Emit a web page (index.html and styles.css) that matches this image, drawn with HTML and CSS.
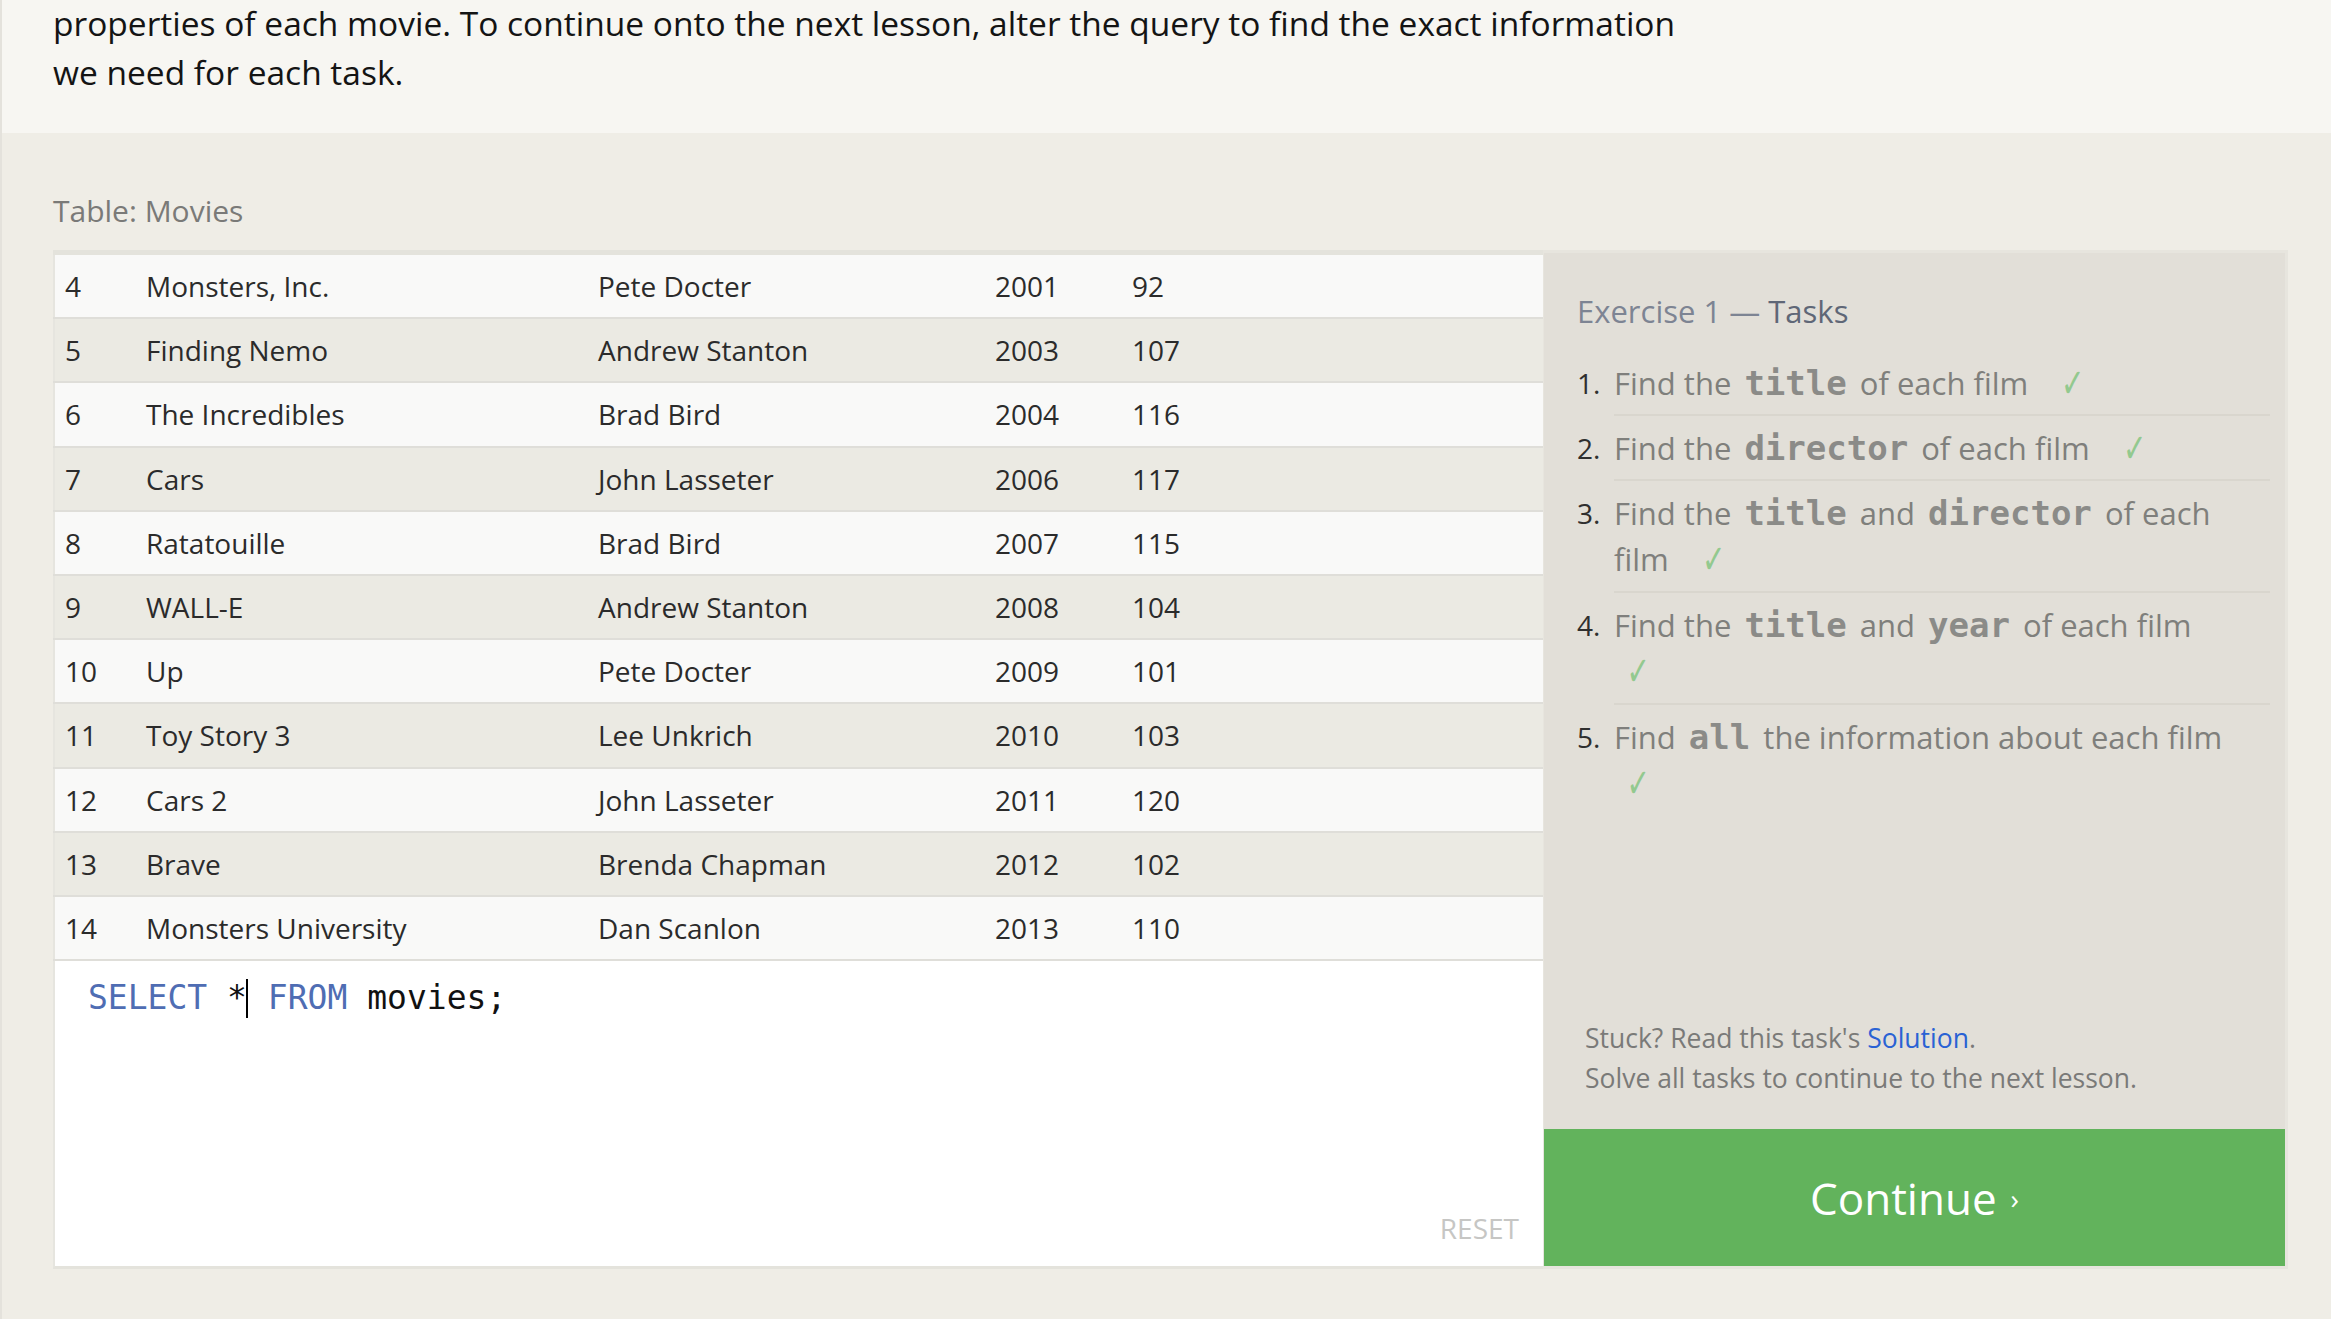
FILE: index.html
```html
<!DOCTYPE html>
<html lang="en">
<head>
<meta charset="utf-8">
<title>SQL Lesson 1: SELECT queries</title>
<link rel="stylesheet" href="styles.css">
</head>
<body>
<div class="page">
  <section class="intro">
    <p>properties of each movie. To continue onto the next lesson, alter the query to find the exact information<br>we need for each task.</p>
  </section>
  <section class="exercise">
    <div class="table-label">Table: Movies</div>
    <div class="workspace">
      <div class="left">
        <table class="movies">
          <colgroup>
            <col class="c-id"><col class="c-title"><col class="c-dir"><col class="c-year"><col>
          </colgroup>
          <tbody>
            <tr><td>4</td><td>Monsters, Inc.</td><td>Pete Docter</td><td>2001</td><td>92</td></tr>
            <tr><td>5</td><td>Finding Nemo</td><td>Andrew Stanton</td><td>2003</td><td>107</td></tr>
            <tr><td>6</td><td>The Incredibles</td><td>Brad Bird</td><td>2004</td><td>116</td></tr>
            <tr><td>7</td><td>Cars</td><td>John Lasseter</td><td>2006</td><td>117</td></tr>
            <tr><td>8</td><td>Ratatouille</td><td>Brad Bird</td><td>2007</td><td>115</td></tr>
            <tr><td>9</td><td>WALL-E</td><td>Andrew Stanton</td><td>2008</td><td>104</td></tr>
            <tr><td>10</td><td>Up</td><td>Pete Docter</td><td>2009</td><td>101</td></tr>
            <tr><td>11</td><td>Toy Story 3</td><td>Lee Unkrich</td><td>2010</td><td>103</td></tr>
            <tr><td>12</td><td>Cars 2</td><td>John Lasseter</td><td>2011</td><td>120</td></tr>
            <tr><td>13</td><td>Brave</td><td>Brenda Chapman</td><td>2012</td><td>102</td></tr>
            <tr><td>14</td><td>Monsters University</td><td>Dan Scanlon</td><td>2013</td><td>110</td></tr>
          </tbody>
        </table>
        <div class="editor">
          <div class="code"><span class="kw">SELECT</span> *<span class="cursor"></span> <span class="kw">FROM</span> movies;</div>
          <div class="reset">RESET</div>
        </div>
      </div>
      <aside class="tasks-panel">
        <div class="tasks-body">
          <h3 class="tasks-title"><span class="ex">Exercise 1 —</span> Tasks</h3>
          <ol class="task-list">
            <li><span class="num">1.</span><span class="txt">Find the <code>title</code> of each film <span class="check">✓</span></span></li>
            <li><span class="num">2.</span><span class="txt">Find the <code>director</code> of each film <span class="check">✓</span></span></li>
            <li><span class="num">3.</span><span class="txt">Find the <code>title</code> and <code>director</code> of each<br>film <span class="check">✓</span></span></li>
            <li><span class="num">4.</span><span class="txt">Find the <code>title</code> and <code>year</code> of each film <span class="check below">✓</span></span></li>
            <li><span class="num">5.</span><span class="txt">Find <code>all</code> the information about each film <span class="check below">✓</span></span></li>
          </ol>
          <div class="stuck">
            <div>Stuck? Read this task's <a href="#">Solution</a>.</div>
            <div>Solve all tasks to continue to the next lesson.</div>
          </div>
        </div>
        <button class="continue">Continue <span class="chev">›</span></button>
      </aside>
    </div>
  </section>
</div>
</body>
</html>
```

FILE: styles.css
```css
html, body {
  margin: 0;
  padding: 0;
}
body {
  background: #efede6;
  font-family: "Open Sans", "Liberation Sans", sans-serif;
  color: #1b1b1b;
  width: 2331px;
  height: 1319px;
  overflow: hidden;
}
.page {
  border-left: 2px solid #e4e2dc;
  height: 1319px;
  box-sizing: border-box;
}
.intro {
  background: #f7f6f2;
  height: 133px;
  padding: 0 0 0 51px;
  box-sizing: border-box;
}
.intro p {
  margin: 0;
  padding-top: 0;
  font-size: 33.5px;
  line-height: 49px;
  color: #141414;
  position: relative;
  top: -1px;
}
.exercise {
  background: #efede6;
  border-top-left-radius: 6px;
  padding: 58px 0 0 51px;
}
.table-label {
  font-size: 30px;
  line-height: 40px;
  color: #7a7a78;
  margin-bottom: 19px;
}
.workspace {
  display: flex;
  align-items: stretch;
}
.left {
  width: 1490px;
  display: flex;
  flex-direction: column;
}
.movies {
  width: 100%;
  border-collapse: collapse;
  table-layout: fixed;
  border-top: 5px solid #e4e3dc;
  border-left: 2px solid #e6e5df;
  font-size: 28px;
  color: #2b2b2b;
}
.c-id { width: 92px; }
.c-title { width: 452px; }
.c-dir { width: 397px; }
.c-year { width: 137px; }
.movies td {
  height: 62.2px;
  padding: 0;
  border-bottom: 2px solid #dfded9;
  white-space: nowrap;
  vertical-align: middle;
}
.movies td:first-child {
  padding-left: 10px;
}
.movies tr:nth-child(odd) td { background: #f9f9f8; }
.movies tr:nth-child(even) td { background: #ebeae3; }
.editor {
  background: #ffffff;
  height: 270px;
  border-left: 2px solid #e6e5df;
  border-bottom: 3px solid #e4e3dc;
  display: flex;
  flex-direction: column;
  justify-content: space-between;
  padding: 14px 24px 21px 33px;
  box-sizing: content-box;
}
.code {
  font-family: "DejaVu Sans Mono", "Liberation Mono", monospace;
  font-size: 33px;
  line-height: 46px;
  color: #111;
  white-space: pre;
}
.code .kw { color: #4f6db3; }
.cursor {
  display: inline-block;
  width: 2px;
  height: 39px;
  background: #000;
  vertical-align: -9px;
  margin-left: -1px;
}
.reset {
  align-self: flex-end;
  font-size: 28px;
  line-height: 34px;
  color: #c6c6c4;
}
.tasks-panel {
  width: 745px;
  display: flex;
  flex-direction: column;
  background: #e2dfd8;
  border: 3px solid #e7e5de;
  border-left-width: 1px;
  box-sizing: border-box;
}
.tasks-body {
  flex: 1;
  display: flex;
  flex-direction: column;
  padding: 36px 15px 31px 33px;
}
.tasks-title {
  margin: 0 0 18px 0;
  font-weight: normal;
  font-size: 31px;
  line-height: 44px;
  color: #5f6777;
}
.tasks-title .ex { color: #7d8493; }
.task-list {
  list-style: none;
  margin: 0;
  padding: 0;
}
.task-list li {
  display: flex;
  align-items: flex-start;
  font-size: 31px;
  line-height: 46px;
}
.task-list .num {
  width: 37px;
  flex: none;
  padding: 9px 0;
  color: #2f2f2f;
  font-size: 28px;
}
.task-list .txt {
  flex: 1;
  padding: 9px 20px 8px 0;
  border-bottom: 2px solid #d9d6ce;
  color: #7f7f7c;
}
.task-list li:nth-child(3) .txt,
.task-list li:nth-child(4) .txt {
  padding-bottom: 9px;
}
.task-list li:last-child .txt {
  border-bottom: none;
}
.task-list code {
  font-family: "DejaVu Sans Mono", "Liberation Mono", monospace;
  font-weight: bold;
  font-size: 34px;
  line-height: 1;
  color: #8b8b88;
  padding: 0 5px;
}
.check {
  display: inline-block;
  margin-left: 20px;
  font-family: "DejaVu Sans", sans-serif;
  font-size: 40px;
  line-height: 1;
  color: #93c98f;
  transform: scaleX(0.7);
  vertical-align: -2px;
}
.check.below {
  display: block;
  width: 30px;
  margin-left: 8px;
  line-height: 46px;
}
.stuck {
  margin-top: auto;
  padding-left: 8px;
  font-size: 26.5px;
  line-height: 40px;
  color: #7a7a78;
}
.stuck a {
  color: #2a62d4;
  text-decoration: none;
}
.continue {
  height: 137px;
  border: none;
  margin: 0;
  background: #62b35c;
  color: #ffffff;
  font-family: "Open Sans", "Liberation Sans", sans-serif;
  font-size: 44px;
  display: flex;
  align-items: center;
  justify-content: center;
  gap: 14px;
  padding: 0;
}
.continue .chev {
  font-size: 28px;
}
```
